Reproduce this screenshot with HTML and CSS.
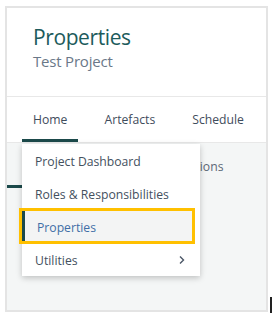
FILE: index.html
```html
<!DOCTYPE html>
<html lang="en">
<head>
    <meta charset="UTF-8">
    <meta name="viewport" content="width=device-width, initial-scale=1.0">
    <title>Properties</title>
    <link rel="stylesheet" href="styles.css">
</head>
<body>
    <div class="frame">
        <div class="header">
            <h1 class="title">Properties</h1>
            <div class="subtitle">Test Project</div>
        </div>

        <div class="tabs">
            <div class="tab active">Home</div>
            <div class="tab">Artefacts</div>
            <div class="tab">Schedule</div>
        </div>

        <div class="content">
            <div class="subtabs">
                <div class="subtab active">Overview</div>
                <div class="subtab">Actions</div>
            </div>
        </div>

        <!-- Home dropdown -->
        <div class="menu">
            <div class="menu-item">Project Dashboard</div>
            <div class="menu-item">Roles &amp; Responsibilities</div>
            <div class="menu-item selected">Properties</div>
            <div class="menu-item">
                <span>Utilities</span>
                <svg class="chevron" width="8" height="10" viewBox="0 0 8 10">
                    <path d="M2 1.5 L5.5 5 L2 8.5" fill="none" stroke="#4a5666" stroke-width="1.4"/>
                </svg>
            </div>
        </div>
    </div>
    <div class="edge"></div>
</body>
</html>
```

FILE: styles.css
```css
* {
    margin: 0;
    padding: 0;
    box-sizing: border-box;
    font-family: "Open Sans", "Noto Sans", sans-serif;
}

body {
    background-color: #ffffff;
    width: 278px;
    height: 319px;
    position: relative;
    overflow: hidden;
}

.frame {
    position: relative;
    margin: 6px 0 0 5px;
    width: 263px;
    height: 306px;
    border: 2px solid #e4e4e4;
    background-color: #f4f6f6;
    display: flex;
    flex-direction: column;
}

/* Header */
.header {
    background-color: #ffffff;
    height: 89px;
    padding: 15px 0 0 26px;
    border-bottom: 1px solid #e8e8e8;
}

.title {
    font-size: 21px;
    font-weight: 400;
    line-height: 28px;
    letter-spacing: -0.4px;
    color: #1d5b5c;
}

.subtitle {
    font-size: 15px;
    line-height: 20px;
    letter-spacing: -0.2px;
    color: #6a7888;
}

/* Tabs */
.tabs {
    background-color: #ffffff;
    height: 46px;
    display: flex;
    gap: 15px;
    padding-left: 15px;
    border-bottom: 1px solid #e8e8e8;
}

.tab {
    font-size: 12.2px;
    color: #3f4c5c;
    padding: 3px 11px 0;
    display: flex;
    align-items: center;
    border-bottom: 3px solid transparent;
}

.tab:first-child {
    padding-left: 11px;
}

.tab.active {
    border-bottom-color: #1c4a4b;
}

/* Sub tabs behind the menu */
.subtabs {
    display: flex;
    height: 45px;
    gap: 58px;
}

.subtab {
    font-size: 12.2px;
    color: #5c6876;
    padding: 4px 12px 0 26px;
    display: flex;
    align-items: center;
    border-bottom: 3px solid transparent;
}

.subtab.active {
    border-bottom-color: #1c4a4b;
}

/* Dropdown */
.menu {
    position: absolute;
    left: 15px;
    top: 136px;
    width: 178px;
    background-color: #ffffff;
    box-shadow: 0 2px 6px rgba(0, 0, 0, 0.22);
    display: flex;
    flex-direction: column;
}

.menu-item {
    position: relative;
    height: 33px;
    padding: 1px 14px 0 13px;
    display: flex;
    align-items: center;
    justify-content: space-between;
    font-size: 12.2px;
    color: #44505e;
}

.menu-item.selected {
    background-color: #f3f4f4;
    color: #3f6ea6;
    margin-right: 8px;
    padding-left: 12px;
    border-left: 3px solid #1c4a4b;
}

.menu-item.selected::after {
    content: "";
    position: absolute;
    left: -6px;
    top: -2px;
    right: -3px;
    bottom: -1px;
    border: 3px solid #ffc000;
}

.chevron {
    display: block;
}

.edge {
    position: absolute;
    left: 270px;
    top: 297px;
    width: 2px;
    height: 16px;
    background-color: #222222;
}
```
